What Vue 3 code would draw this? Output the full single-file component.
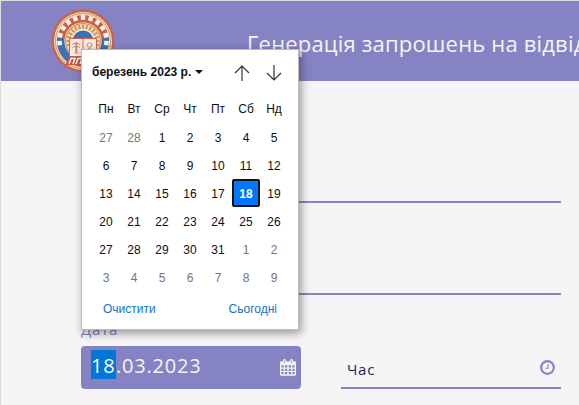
<script setup>
const weekdays = ['Пн', 'Вт', 'Ср', 'Чт', 'Пт', 'Сб', 'Нд']

// Six full weeks, starting with the two last days of February
const days = Array.from({ length: 42 }, (_, i) => {
  if (i < 2) return { n: 27 + i, other: true }
  if (i < 33) return { n: i - 1, other: false, selected: i - 1 === 18 }
  return { n: i - 32, other: true }
})

const notches = Array.from({ length: 11 }, (_, i) => -95 + i * 19)
const rays = Array.from({ length: 15 }, (_, i) => -105 + i * 15)
</script>

<template>
  <div class="page">
    <header class="header">
      <svg class="logo" viewBox="0 0 64 64">
        <circle cx="32" cy="32" r="31.5" fill="#c9634b" />
        <circle cx="32" cy="32" r="29" fill="#f7ead9" />
        <circle cx="32" cy="32" r="27.6" fill="none" stroke="#d9a05a" stroke-width="1.1" />
        <circle cx="32" cy="32" r="26" fill="#cb6048" />
        <path d="M6 29a26 26 0 0 0 16.500 27L23 44 12 29z" fill="#3f70b4" />
        <path d="M58 29a26 26 0 0 1-16.500 27L41 44 52 29z" fill="#3f70b4" />
        <rect
          v-for="a in notches"
          :key="a"
          x="29.8"
          y="6.2"
          width="4.400"
          height="4.600"
          fill="#fbf4ee"
          :transform="`rotate(${a} 32 32)`"
        />
        <circle cx="32" cy="32" r="18.600" fill="#f8eddd" />
        <circle cx="32" cy="32" r="17.400" fill="none" stroke="#d39a53" stroke-width="1.300" />
        <rect
          v-for="a in rays"
          :key="`r${a}`"
          x="30.800"
          y="15.500"
          width="2.400"
          height="4.500"
          fill="#d39a53"
          :transform="`rotate(${a} 32 32)`"
        />
        <circle cx="32" cy="32" r="10.500" fill="#3f70b4" />
        <path d="M18.500 29.500h27v18h-27z" fill="#f8e9e3" stroke="#c9634b" stroke-width="1" />
        <path d="M32 29.500v18" stroke="#c9634b" stroke-width=".9" />
        <path d="M25.300 33v11" stroke="#c9796a" stroke-width="1.800" />
        <path d="M21 35.500l4-1.500 4.500 1.500M21.500 38.500l3.500-1.500 4 1.500M23.500 44h4" fill="none" stroke="#d08d7d" stroke-width="1.100" />
        <circle cx="38.500" cy="36" r="2.300" fill="none" stroke="#d08d7d" />
        <path d="M37.300 39h2.400v3h-2.400z" fill="#d08d7d" />
        <path d="M17.500 48h29l3 8H14.500z" fill="#c9533c" />
        <path d="M18 55l2-5.500h4L22 55M25 55l2-5.500h4L29 55M32 55l2-5.500h4" fill="none" stroke="#fff" stroke-width="1.400" />
      </svg>
      <h1 class="title">Генерація запрошень на відвід</h1>
    </header>

    <main class="form">
      <div class="line first"></div>
      <div class="line second"></div>
      <div class="row">
        <div class="field">
          <label class="label">Дата</label>
          <div class="date">
            <span class="value"><span class="picked">18</span>.03.2023</span>
            <svg class="cal-icon" viewBox="0 0 16 17">
              <path
                fill="#f5f5f5"
                fill-rule="evenodd"
                d="M1.300 2.300H3V1.500a1.400 1.400 0 0 1 2.800 0v.8h4.400v-.8a1.400 1.400 0 0 1 2.800 0v.8h1.700q1.300 0 1.300 1.300v11.900q0 1.300-1.300 1.300H1.300Q0 16.800 0 15.500V3.600Q0 2.300 1.300 2.300zM1.400 6.300v2.200h2.300V6.300zM4.900 6.300v2.200h2.500V6.300zM8.600 6.300v2.200h2.500V6.300zM12.300 6.300v2.200h2.300V6.300zM1.400 9.700v2.200h2.300V9.700zM4.900 9.700v2.200h2.500V9.700zM8.600 9.700v2.200h2.500V9.700zM12.300 9.700v2.200h2.300V9.700zM1.400 13.100v2.200h2.300v-2.200zM4.900 13.100v2.200h2.500v-2.200zM8.600 13.100v2.200h2.500v-2.200zM12.300 13.100v2.200h2.300v-2.200z"
              />
              <path d="M4.400 1.500v2.700M11.600 1.500v2.700" stroke="#8683c5" stroke-width=".8" />
            </svg>
          </div>
        </div>
        <div class="time">
          <span>Час</span>
          <svg class="clock" viewBox="0 0 14 14" fill="none" stroke="#8683c5">
            <circle cx="7" cy="7" r="5.900" stroke-width="2" />
            <path d="M7.500 3.800v3.900H4.800" stroke-width="1.100" />
          </svg>
        </div>
      </div>
    </main>

    <section class="popup">
      <div class="top">
        <span class="month">березень 2023 р.</span>
        <span class="caret"></span>
        <svg class="arrow up" viewBox="0 0 16 16" fill="none" stroke="#333">
          <path d="M8 16V1M1 8l7-7 7 7" stroke-width="1.200" />
        </svg>
        <svg class="arrow" viewBox="0 0 16 16" fill="none" stroke="#333">
          <path d="M8 0v15M1 8l7 7 7-7" stroke-width="1.200" />
        </svg>
      </div>
      <div class="grid weekdays">
        <span v-for="w in weekdays" :key="w" class="cell">{{ w }}</span>
      </div>
      <div class="grid">
        <span
          v-for="(d, i) in days"
          :key="i"
          class="cell"
          :class="{ other: d.other, selected: d.selected }"
        >{{ d.n }}</span>
      </div>
      <div class="actions">
        <span>Очистити</span>
        <span>Сьогодні</span>
      </div>
    </section>
  </div>
</template>

<style>
body {
  overflow: hidden;
}
</style>

<style scoped>
.page {
  position: relative;
  box-sizing: border-box;
  width: 579px;
  height: 405px;
  overflow: hidden;
  border-top: 1px solid #dcdcdc;
  border-left: 1px solid #dcdcdc;
  background: #f5f5f5;
  font-family: "Open Sans", "Noto Sans", sans-serif;
}
.header {
  display: flex;
  height: 80px;
  background: #8683c5;
}
.logo {
  flex: none;
  width: 64px;
  height: 64px;
  margin: 8px 0 0 50px;
}
.title {
  margin: 26px 0 0 132px;
  font-size: 22px;
  line-height: 32px;
  font-weight: 400;
  letter-spacing: 0.18px;
  white-space: nowrap;
  color: #f5f5f5;
}
.form {
  width: 480px;
  margin-left: 80px;
}
.line {
  height: 2px;
  background: #8683c5;
}
.first {
  margin-top: 120px;
}
.second {
  margin-top: 90px;
}
.row {
  display: flex;
  gap: 40px;
  padding-top: 25px;
}
.field {
  width: 220px;
}
.label {
  display: block;
  height: 26px;
  line-height: 18px;
  font-size: 15px;
  letter-spacing: 0.8px;
  color: #8683c5;
}
.date {
  display: flex;
  box-sizing: border-box;
  height: 43px;
  padding: 4px 5px 0 10px;
  justify-content: space-between;
  border-radius: 4px;
  background: #8683c5;
  color: #f5f5f5;
}
.value {
  font-size: 20px;
  line-height: 31px;
  letter-spacing: 0.8px;
}
.picked {
  display: inline-block;
  height: 29px;
  padding-right: 0.5px;
  background: #0078d7;
  color: #fff;
}
.cal-icon {
  width: 16px;
  height: 17px;
  margin-top: 9px;
}
.time {
  display: flex;
  box-sizing: border-box;
  width: 220px;
  height: 43px;
  margin-top: 26px;
  padding: 12px 6px 0;
  justify-content: space-between;
  border-bottom: 2px solid #8683c5;
  font-size: 15px;
  line-height: 22px;
  letter-spacing: 0.7px;
  color: #28215f;
}
.clock {
  width: 15px;
  height: 15px;
  margin-top: 2px;
}
.popup {
  position: absolute;
  left: 80px;
  top: 48px;
  box-sizing: border-box;
  width: 218px;
  height: 281px;
  padding: 0 10px;
  border: 1px solid #bbb;
  background: #fff;
  box-shadow: 2px 3px 9px rgba(0, 0, 0, 0.4);
  font: 12px "Liberation Sans", Arial, sans-serif;
  color: #101010;
}
.top {
  display: flex;
  height: 44px;
  align-items: center;
}
.month {
  font-weight: 700;
}
.caret {
  margin-left: 4px;
  border: 4px solid transparent;
  border-top-color: #101010;
  border-bottom: 0;
}
.arrow {
  width: 16px;
  height: 16px;
  margin-top: 2px;
}
.up {
  margin-left: auto;
  margin-right: 16px;
}
.arrow:last-child {
  margin-right: 6px;
}
.grid {
  display: grid;
  grid-template-columns: repeat(7, 28px);
  grid-auto-rows: 28px;
}
.weekdays {
  height: 29px;
}
.cell {
  display: flex;
  box-sizing: border-box;
  align-items: center;
  justify-content: center;
  padding-top: 2px;
}
.other {
  color: #767676;
}
.selected {
  border: 2px solid #101010;
  border-radius: 2px;
  background: #0075ff;
  color: #fff;
  font-weight: 700;
}
.actions {
  display: flex;
  justify-content: space-between;
  padding: 11px 11px 0 11px;
  color: #0f73c6;
}
</style>
